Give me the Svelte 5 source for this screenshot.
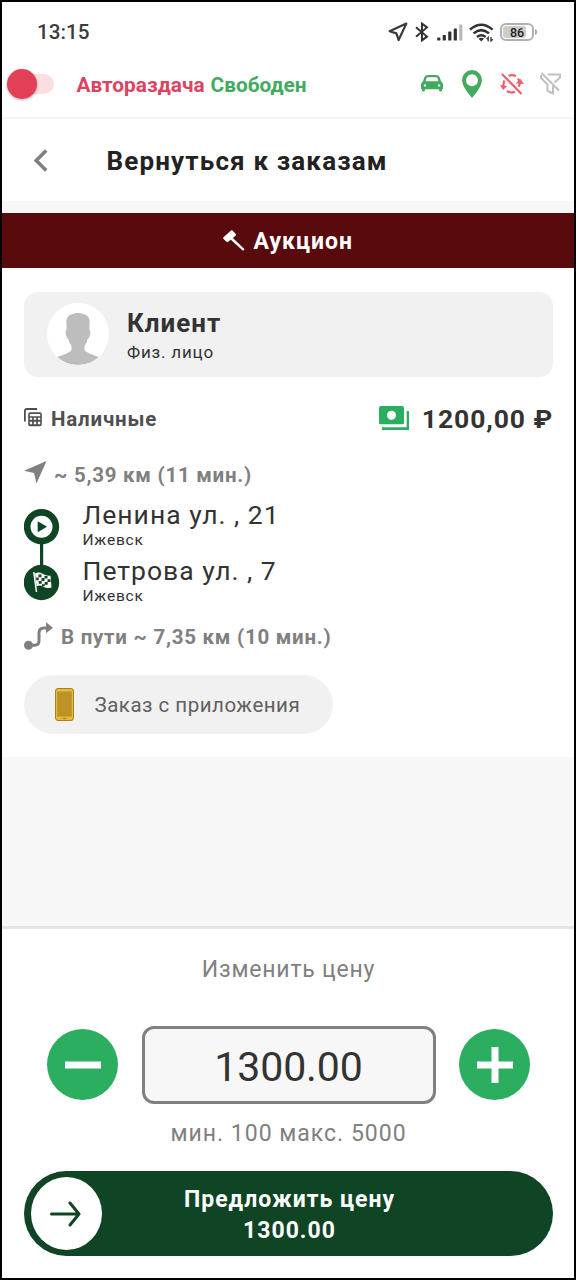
<script>
  const route = [
    { street: 'Ленина ул. , 21', city: 'Ижевск' },
    { street: 'Петрова ул. , 7', city: 'Ижевск' }
  ];
  const bars = [3, 5.5, 9, 12, 16];
</script>

<div class="screen">
  <div class="status">
    <span class="clock">13:15</span>
    <div class="sys">
      <svg class="nav" width="20" height="20" viewBox="0 0 20 20"><path d="M18.3 1.6 10.6 18 8.4 11.4 1.6 9.2Z" fill="none" stroke="#3a3a3a" stroke-width="2.2" stroke-linejoin="round" /></svg>
      <svg class="bt" width="14" height="20" viewBox="0 0 14 20"><path d="M1 5.2 12 14.6 7 18.4V1.6L12 5.4 1 14.8" fill="none" stroke="#333" stroke-width="2" /></svg>
      <svg class="signal" width="26" height="17" viewBox="0 0 26 17">
        {#each bars as h, i}<rect x={i * 5.5 + 0.2} y={16.5 - h} width="3.2" height={h} rx=".6" fill={i === 4 ? '#b8b8b8' : '#333'} />{/each}
      </svg>
      <svg class="wifi" width="25" height="19" viewBox="0 0 25 19"><g fill="none" stroke="#333" stroke-width="2.5"><path d="M1 6.6Q12.2-3.2 23.6 6.6" /><path d="M4.6 10.4Q12.3 3.8 20 10.4" /><path d="M8 13.9Q12.3 10.6 16.6 13.9" /></g><path d="M9.6 15.7Q12.3 14 15 15.7L12.3 18.4Z" fill="#333" /><path d="M19.2 18.4v-4l-1.6 1.700M22 14v4l1.800-1.700" fill="none" stroke="#333" stroke-width="1.3" /></svg>
      <div class="battery"><i></i><span>86</span></div><div class="tip"></div>
    </div>
  </div>

  <div class="mode">
    <div class="toggle"><i></i></div>
    <span class="auto">Автораздача</span><span class="free">Свободен</span>
    <div class="modes">
      <svg class="car" width="22" height="17" viewBox="0 0 22 17"><path fill="#43ab60" fill-rule="evenodd" d="M6.500 0h9q2 0 2.800 1.600L20 6.200Q22 7.500 22 9.500v4q0 .8-1 .8v.9q0 1.400-1.500 1.400t-1.500-1.400v-.9H4v.9q0 1.400-1.500 1.400T1 15.200v-.9q-1 0-1-.8v-4Q0 7.500 2 6.200L3.700 1.600Q4.500 0 6.500 0ZM6 2.200 4.500 6.200H17.500L16 2.200ZM4 9.200a1.200 1.200 0 1 0 .01 2.400 1.200 1.200 0 0 0-.01-2.400Zm14 0a1.200 1.200 0 1 0 .01 2.400 1.200 1.200 0 0 0-.01-2.400Z" /></svg>
      <svg class="pin" width="20" height="28" viewBox="0 0 20 28"><path fill="#43ab60" fill-rule="evenodd" d="M10 0a10 10 0 0 1 10 10q0 6.500-10 18Q0 16.500 0 10A10 10 0 0 1 10 0Zm0 4.200a6 6 0 1 0 .01 12 6 6 0 0 0-.01-12Z" /></svg>
      <svg class="swap" width="24" height="22" viewBox="0 0 24 22"><g fill="none" stroke="#ee5f6b" stroke-width="2.200"><path d="M2 1 21.500 21" /><path d="M8.500 2.800Q12 1.200 16 3M18 5.500 19.300 8" /><path d="M3.600 13.500Q3 10.500 4.500 7.500M7 18q3.800 2.600 8 .8" /><path d="M18.800 13.800 20.200 9" /></g><path fill="#ee5f6b" d="M15.800 10.500 20.300 5.800 24 11ZM0 11.800 7.300 13.200 3 17Z" /></svg>
      <svg class="filter" width="22" height="23" viewBox="0 0 22 23"><g fill="none" stroke="#c0c0c0" stroke-width="2"><path d="M1.500 1 19 18.500" /><path d="M7.500 2.500H20V5.500L14.500 10.500M1 3V6L7.500 12.500V19L13 21.500V13.500" /></g></svg>
    </div>
  </div>

  <div class="header">
    <svg width="15" height="23" viewBox="0 0 15 23"><path d="M13.200 1.500 3.200 11.500 13.200 21.500" fill="none" stroke="#808080" stroke-width="3.600" /></svg>
    <span>Вернуться к заказам</span>
  </div>

  <div class="auction">
    <svg width="22" height="22" viewBox="0 0 22 22"><path fill="#fff" d="M.2 7.500 8 .4q.8-.5 1.500.2L12.800 4q.6.800 0 1.500L5 12q-.8.500-1.500-.2L.3 8.800ZM7.800 9.800 9.900 7.900 21.600 19.200 20 20.800Z" /></svg>
    <span>Аукцион</span>
  </div>

  <div class="order">
    <div class="client">
      <div class="avatar"><svg width="62" height="62" viewBox="0 0 62 62"><path fill="#bdbdbd" d="M19.500 21Q18 10.500 31 10Q44 10.500 42.500 21L42.400 27Q44.500 28 42.600 33Q42 36 40.500 36.500Q39.500 41 37.500 43V47Q39 50 52 54Q43 62 31 62T10 54Q23 50 24.500 47V43Q22.500 41 21.500 36.500Q20 36 19.400 33Q17.500 28 19.600 27Z" /></svg></div>
      <div class="who"><div class="name">Клиент</div><div class="kind">Физ. лицо</div></div>
    </div>

    <div class="payment">
      <svg class="method-icon" width="18" height="19" viewBox="0 0 18 19"><path d="M.9 13.500V3.200Q.9 1 3 1H13" fill="none" stroke="#4f4f4f" stroke-width="1.800" /><path fill="#4f4f4f" fill-rule="evenodd" d="M6 4.200h10Q17.800 4.200 17.800 6v10.500q0 1.800-1.800 1.800H6q-1.800 0-1.800-1.800V6Q4.200 4.200 6 4.200ZM5.800 6v2.200h10.400V6Zm0 3.800v2h2.300v-2Zm4 0v2h2.400v-2Zm4.100 0v2h2.300v-2ZM5.800 13.800v2.500h2.300v-2.500Zm4 0v2.500h2.400v-2.500Zm4.100 0v2.500h2.300v-2.500Z" /></svg>
      <span class="method">Наличные</span>
      <svg class="cash" width="30" height="24" viewBox="0 0 30 24"><path fill="#2bae60" fill-rule="evenodd" d="M2 0h21q2 0 2 2v15q0 1.200-1.200 1.200H1.200Q0 18.200 0 17V2Q0 0 2 0Zm10.500 4.700a4.500 4.500 0 1 0 .01 9 4.500 4.500 0 0 0-.01-9ZM3 21.300h24.700V5H30v19H3Z" /></svg>
      <span class="price">1200,00 ₽</span>
    </div>

    <div class="dist first"><svg width="23" height="23" viewBox="0 0 23 23"><path fill="#808080" d="M22.500 0 12.500 22.500 10 12 0 9.700Z" /></svg><span>~ 5,39 км (11 мин.)</span></div>

    <div class="route">
      <svg width="36" height="92" viewBox="0 0 36 92"><path fill="#0f4425" d="M16 30h3.200v30H16z" /><circle cx="17.500" cy="17.700" r="17.700" fill="#0f4425" /><circle cx="17.500" cy="17.700" r="11" fill="#fff" /><path fill="#0f4425" d="M13.700 12.300 23 17.800 13.700 23.300Z" /><circle cx="17.500" cy="73.500" r="17.700" fill="#0f4425" />
        <path d="M9.800 63 12.500 83" stroke="#fff" stroke-width="1.500" /><path fill="#fff" d="M11 64.500Q15 62.500 19 65T26.500 66.500L27.500 78.500Q23 80 19.500 77.700T12.600 77.200Z" /><path fill="#0f4425" d="M14.500 65.500h3v2.700h-3zM20.500 67h3v2.600h-3zM12.200 68.500h2.500v2.800h-2.500zM17.500 69h3v3h-3zM23.500 70.200h3v2.800h-3zM14.700 72h3v2.800h-3zM20.700 73h3v2.800h-3zM18 75.300h2.700v2h-2.700z" /></svg>
      <div>{#each route as stop}<div class="stop"><div class="street">{stop.street}</div><div class="city">{stop.city}</div></div>{/each}</div>
    </div>

    <div class="dist second"><svg width="29" height="28" viewBox="0 0 29 28"><circle cx="4.500" cy="23.300" r="4.500" fill="#808080" /><path d="M5 23.200H10.500Q15 23.200 15 18.500V11Q15 6 20 6H23" fill="none" stroke="#808080" stroke-width="3" /><path fill="#808080" d="M22 .3 29 5.800 22 11.300Z" /></svg><span>В пути ~ 7,35 км (10 мин.)</span></div>

    <div class="pill"><svg width="19" height="33" viewBox="0 0 19 33"><rect x=".5" y=".5" width="18" height="32" rx="2.500" fill="#e6b93a" stroke="#a68220" /><rect x="2.200" y="3.500" width="14.600" height="25" fill="#bd9326" /><rect x="7.500" y="29.700" width="4" height="1.600" rx=".8" fill="#b38a20" /></svg><span>Заказ с приложения</span></div>
  </div>

  <div class="gap"></div>

  <div class="bid">
    <div class="label">Изменить цену</div>
    <div class="stepper">
      <div class="round"><svg width="36" height="36" viewBox="0 0 36 36"><path d="M0 18H36" stroke="#fff" stroke-width="7" /></svg></div>
      <div class="field">1300.00</div>
      <div class="round"><svg width="36" height="36" viewBox="0 0 36 36"><path d="M0 18H36M18 0V36" stroke="#fff" stroke-width="7" /></svg></div>
    </div>
    <div class="limits">мин. 100 макс. 5000</div>
    <div class="offer">
      <div class="knob"><svg width="32" height="26" viewBox="0 0 32 26"><path d="M1.500 13H29M20 2 29 13 20 24" fill="none" stroke="#0f4425" stroke-width="3" stroke-linecap="round" stroke-linejoin="round" /></svg></div>
      <div class="offer-text"><div>Предложить цену</div><div>1300.00</div></div>
    </div>
  </div>
</div>

<style>
  :global(body) { margin: 0; background: #000; }
  * { box-sizing: border-box; }
  svg { display: block; flex: none; }
  .screen { width: 576px; height: 1280px; border: 2px solid #000; background: #fff; font-family: Roboto, 'Noto Sans', sans-serif; color: #333; display: flex; flex-direction: column; overflow: hidden; white-space: nowrap; }
  .status { height: 48px; flex: none; display: flex; align-items: center; padding: 12px 37px 0 35px; justify-content: space-between; }
  .clock { font-size: 20.700px; line-height: 34px; font-weight: 500; color: #3c3c3c; }
  .sys { display: flex; align-items: center; height: 34px; }
  .bt { margin-left: 7px; }
  .signal { margin-left: 8px; }
  .wifi { margin-left: 6px; }
  .battery { position: relative; width: 34px; height: 18px; border: 2px solid #b0b0b0; border-radius: 6px; margin-left: 6px; display: flex; align-items: center; justify-content: center; font-size: 12.500px; font-weight: 500; color: #222; }
  .battery i { position: absolute; left: 1px; top: 1px; bottom: 1px; width: 23px; background: #ccc; border-radius: 3px; }
  .battery span { position: relative; }
  .tip { width: 2px; height: 6px; margin-left: 1px; background: #b0b0b0; border-radius: 0 2px 2px 0; }
  .mode { height: 69px; flex: none; border-bottom: 2px solid #f3f3f3; display: flex; align-items: center; padding: 2px 12px 0 5px; font-size: 20.800px; font-weight: 700; }
  .toggle { width: 47px; height: 30px; margin-top: -2px; display: flex; align-items: center; position: relative; }
  .toggle::before { content: ''; position: absolute; left: 10px; top: 5px; width: 37px; height: 20px; border-radius: 10px; background: #fcdde0; }
  .toggle i { position: relative; width: 30px; height: 30px; border-radius: 50%; background: #e34058; box-shadow: 0 1px 3px #0005; }
  .auto { color: #dc4361; margin-left: 22.500px; }
  .free { color: #43ab60; margin-left: 6px; }
  .modes { margin-left: auto; display: flex; align-items: center; margin-top: -2px; }
  .pin { margin: 0 18.500px; }
  .filter { margin-left: 16px; }
  .header { height: 82px; flex: none; display: flex; align-items: center; padding: 2px 0 0 31px; font-size: 26px; font-weight: 700; color: #222; gap: 58.500px; letter-spacing: 1.150px; }
  .header svg { margin-top: -2px; }
  .auction { height: 67px; flex: none; border-top: 12px solid #f7f7f7; background: #590a0c; color: #fff; display: flex; align-items: center; justify-content: center; gap: 8.500px; font-size: 23px; font-weight: 700; letter-spacing: 1px; padding-top: 2px; }
  .auction svg { margin-top: -2px; }
  .order { height: 489px; flex: none; padding: 23.500px 21px 0 22px; }
  .client { height: 85.500px; background: #f1f1f1; border-radius: 14px; display: flex; align-items: center; gap: 18px; padding-left: 23px; }
  .avatar { width: 62px; height: 62px; margin-top: -1px; border-radius: 50%; background: #fff; overflow: hidden; }
  .who { padding-top: 3px; }
  .name { font-size: 26px; font-weight: 700; line-height: 32px; letter-spacing: 1px; }
  .kind, .city { letter-spacing: .8px; }
  .kind { font-size: 17px; line-height: 26px; }
  .payment { height: 30px; margin-top: 27px; display: flex; align-items: center; }
  .method-icon { margin-top: -3px; }
  .method { margin-left: 9px; font-size: 20.500px; font-weight: 700; letter-spacing: .8px; color: #4f4f4f; }
  .cash { margin: -2px 12.500px 0 auto; }
  .price { font-size: 26.500px; font-weight: 700; letter-spacing: .9px; margin-top: -2px; }
  .dist { height: 30px; display: flex; align-items: center; gap: 8px; font-size: 20.500px; font-weight: 700; letter-spacing: .75px; color: #808080; }
  .dist svg { margin-top: -2px; }
  .first { margin-top: 25.500px; gap: 7px; }
  .first svg { margin-top: -4px; }
  .route { display: flex; gap: 22.500px; height: 111px; margin-top: 7.500px; }
  .route svg { margin-top: 12px; }
  .stop { height: 55.500px; }
  .street { font-size: 26.500px; line-height: 35px; letter-spacing: 1px; }
  .city { font-size: 15.500px; line-height: 17px; }
  .second { margin-top: 14px; }
  .pill { margin-top: 23px; width: 309px; height: 59px; border-radius: 30px; background: #f1f1f1; display: flex; align-items: center; padding-left: 31px; gap: 20.500px; font-size: 20.500px; letter-spacing: .5px; color: #606060; }
  .gap { flex: 1; background: #f7f7f7; }
  .bid { height: 352px; flex: none; border-top: 3px solid #e5e5e5; padding: 26px 21px 0 22px; font-size: 23px; letter-spacing: .8px; text-align: center; color: #808080; }
  .label { height: 30px; line-height: 30px; }
  .stepper { display: flex; align-items: center; gap: 23.500px; margin-top: 41px; height: 78px; padding: 0 23px; }
  .round { width: 71px; height: 71px; flex: none; border-radius: 50%; background: #2bae60; display: flex; align-items: center; justify-content: center; margin-top: -1px; }
  .field { flex: 1; height: 78px; border: 3px solid #808080; border-radius: 12px; background: #f7f7f7; color: #333; font-size: 41px; line-height: 76px; letter-spacing: -.1px; }
  .limits { height: 30px; line-height: 30px; margin-top: 15px; letter-spacing: 1px; }
  .offer { height: 85px; margin-top: 22px; border-radius: 43px; background: #0f4425; color: #fff; display: flex; align-items: center; padding-left: 7px; font-weight: 700; line-height: 31.500px; letter-spacing: 1px; }
  .knob { width: 71px; height: 73px; flex: none; border-radius: 50%; background: #fff; display: flex; align-items: center; justify-content: center; padding-right: 2px; }
  .offer-text { flex: 1; padding-right: 76px; padding-top: 3px; }
</style>
